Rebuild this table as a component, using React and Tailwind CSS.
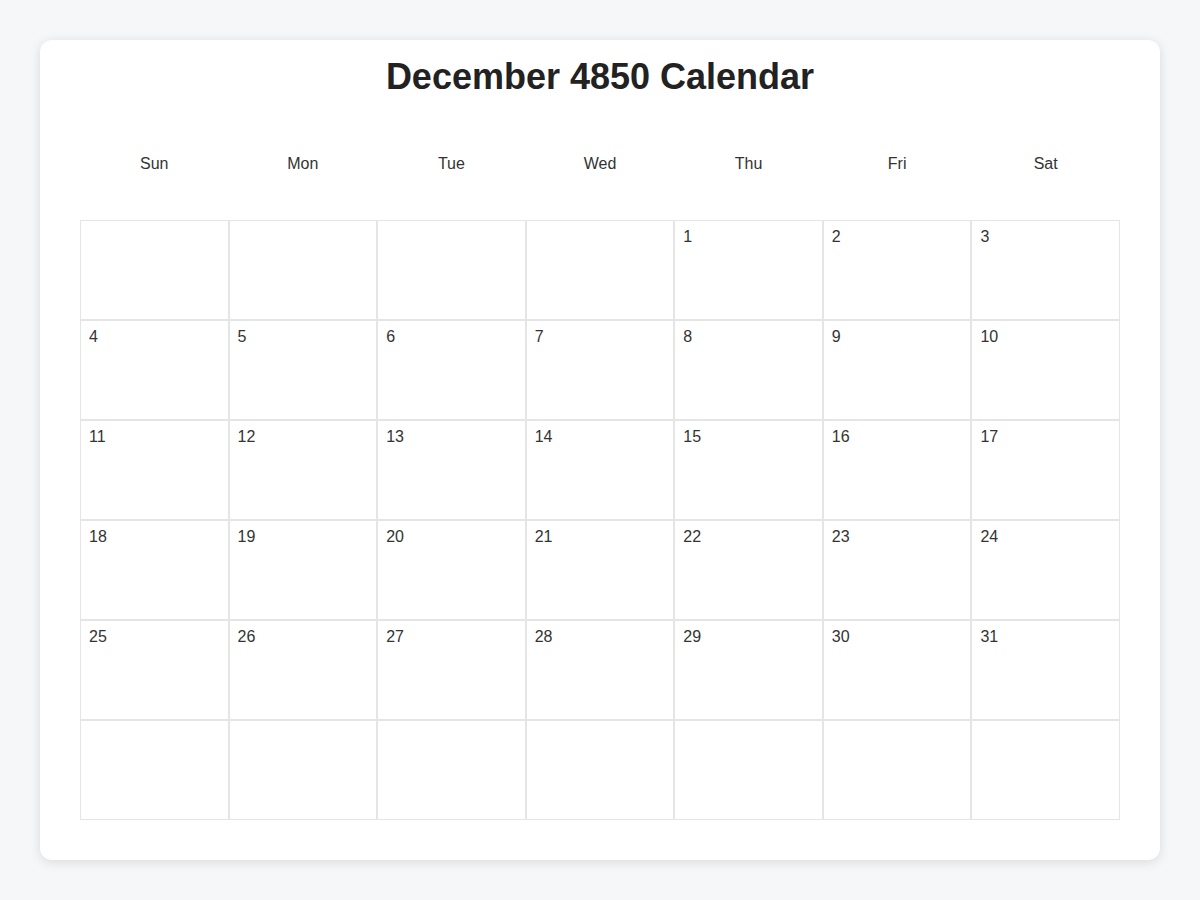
import React from "react";

const DAYS = ["Sun", "Mon", "Tue", "Wed", "Thu", "Fri", "Sat"];

// December 4850 starts on a Thursday, 31 days, 6 rows
const buildCells = () => {
  const cells = [];
  const offset = 4;
  for (let i = 0; i < 42; i++) {
    const day = i - offset + 1;
    cells.push(day >= 1 && day <= 31 ? day : null);
  }
  return cells;
};

const App = () => {
  const cells = buildCells();

  return (
    <div
      className="min-h-screen w-full bg-[#f6f7f9] pt-10 px-10"
      style={{ fontFamily: '"Liberation Sans", Arial, sans-serif' }}
    >
      <div className="w-[1120px] h-[820px] bg-white rounded-xl shadow-[0_2px_12px_rgba(0,0,0,0.12)] px-10 pt-[17px] pb-10">
        <h1 className="text-center text-[36px] leading-10 font-bold text-[#222]">
          December 4850 Calendar
        </h1>

        <div className="grid grid-cols-7 mt-[45px] h-[44px] mb-[34px]">
          {DAYS.map((d) => (
            <div
              key={d}
              className="flex items-center justify-center text-base text-[#333]"
            >
              {d}
            </div>
          ))}
        </div>

        <div className="grid grid-cols-7">
          {cells.map((day, i) => (
            <div
              key={i}
              className="h-[100px] border border-[#e5e5e5] px-2 pt-[6px] text-base leading-5 text-[#333]"
            >
              {day}
            </div>
          ))}
        </div>
      </div>
    </div>
  );
};

export default App;
